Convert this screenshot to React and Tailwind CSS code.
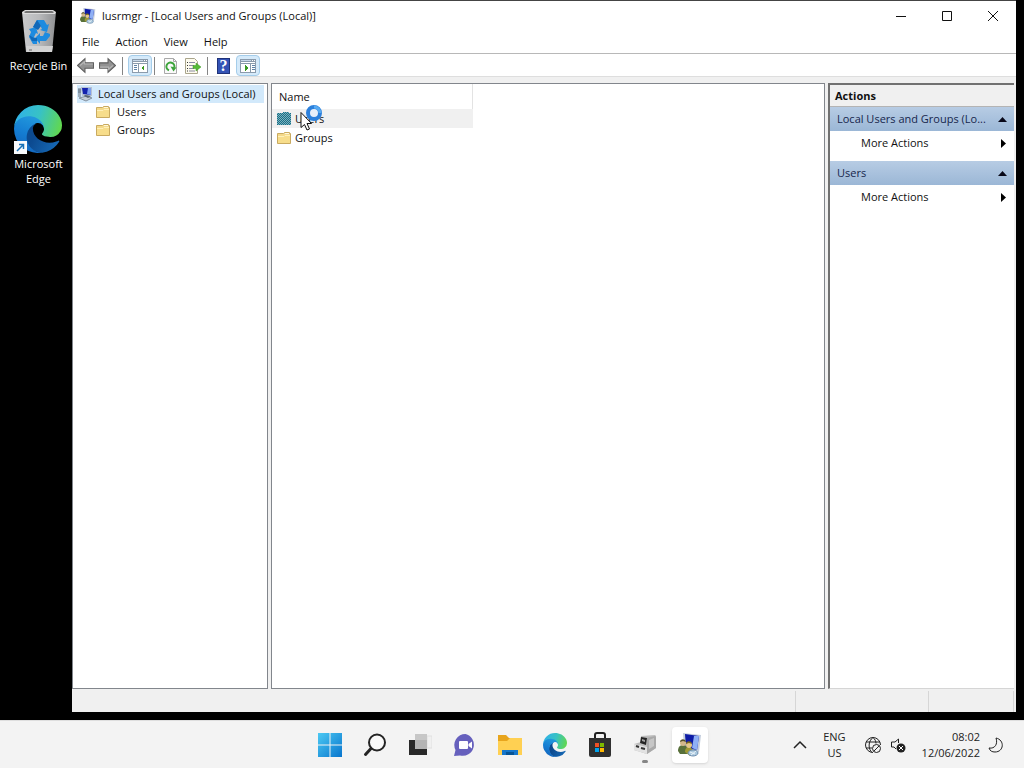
import React from 'react';

const EdgeLogo = ({ className }) => (
  <svg viewBox="0 0 256 256" className={className} aria-hidden="true">
    <defs>
      <linearGradient id="edge-deep" x1="0.3" y1="0.3" x2="1" y2="0.6">
        <stop offset="0" stopColor="#0c4a90" />
        <stop offset="1" stopColor="#1668b4" />
      </linearGradient>
      <linearGradient id="edge-blue" x1="0.6" y1="0.1" x2="0.3" y2="1">
        <stop offset="0" stopColor="#2196dc" />
        <stop offset="0.5" stopColor="#147cd2" />
        <stop offset="1" stopColor="#1464bb" />
      </linearGradient>
      <linearGradient id="edge-green" x1="0" y1="0.4" x2="1" y2="0.6">
        <stop offset="0" stopColor="#2fb1e8" />
        <stop offset="0.5" stopColor="#38c2c4" />
        <stop offset="1" stopColor="#62d84e" />
      </linearGradient>
    </defs>
    <path fill="url(#edge-deep)" d="M235.68 190.46a93.73 93.73 0 01-10.54 4.71 101.87 101.87 0 01-35.9 6.46c-47.32 0-88.54-32.55-88.54-74.32A31.48 31.48 0 01117.13 99.9c-42.8 1.8-53.8 46.4-53.8 72.53 0 73.88 68.09 81.37 82.76 81.37 7.91 0 19.84-2.3 27-4.56l1.31-.44a128.34 128.34 0 0066.6-52.8 4 4 0 00-5.32-5.54z" />
    <path fill="url(#edge-blue)" d="M105.73 241.42a79.2 79.2 0 01-22.74-21.34 80.72 80.72 0 0129.53-120c3.12-1.47 8.45-4.13 15.54-4a32.35 32.35 0 0125.69 13 31.88 31.88 0 016.36 18.66c0-.21 24.46-79.6-80-79.6-43.9 0-80 41.66-80 78.21a130.15 130.15 0 0012.11 56 128 128 0 00156.38 67.11 75.55 75.55 0 01-62.78-8z" />
    <path fill="url(#edge-green)" d="M152.33 148.86c-.81 1.05-3.3 2.5-3.3 5.66 0 2.61 1.7 5.12 4.72 7.23 14.38 10 41.49 8.68 41.56 8.68a59.56 59.56 0 0030.27-8.35A61.38 61.38 0 00256 109.2c.26-22.41-8-37.31-11.34-43.91C223.46 23.84 177.72 0 128 0A128 128 0 000 126.2c.48-36.54 36.8-66.05 80-66.05 3.5 0 23.46.34 42 10.07 16.34 8.58 24.9 18.94 30.85 29.21 6.18 10.67 7.28 24.15 7.28 29.52s-2.74 13.33-7.8 19.91z" />
  </svg>
);

const RecycleBin = () => (
  <svg viewBox="0 0 48 48" className="size-12" aria-hidden="true">
    <defs>
      <linearGradient id="bin" x1="0" y1="0" x2="1" y2="0">
        <stop offset="0" stopColor="#c9cacc" />
        <stop offset="0.5" stopColor="#b9babc" />
        <stop offset="1" stopColor="#8f9092" />
      </linearGradient>
    </defs>
    <path d="M7 4h34l-4 40H11z" fill="url(#bin)" />
    <path d="M7 4l3-2h28l3 2-1 2H8z" fill="#dcdcdc" />
    <path d="M9 4l2-1h26l2 1-1 1H10z" fill="#727272" />
    <path d="M11 38h27l-1 6H12z" fill="#d2d2d2" />
    <path d="M14 42h3" stroke="#666" />
    <g fill="#1d8be0">
      <path d="M18 19l4-7h7l3 5 2-1-2 8-7-2 2-1-2-4-3 4z" />
      <path d="M14 21l7-2 2 7-2-1-2 4 3 3v4h-4l-4-7 2-5z" />
      <path d="M35 26l-5-2-2 4h-3v-3l-5 5 5 6v-3h6l4-5z" />
    </g>
    <path d="M22 12l4 6-3 4-5-3zM14 27l3 6h5v-3h-3z" fill="#1068b8" />
  </svg>
);

// Computer with two users in front of a blue screen
const UsersApp = ({ className }) => (
  <svg viewBox="0 0 24 24" className={className} aria-hidden="true">
    <path d="M5 0l18 2-2 17-15-2z" fill="#c3cddc" />
    <path d="M7 1l14 2-2 14-11-2z" fill="#0d1ba6" />
    <path d="M16 3l5 0-2 14-5-2 1-6z" fill="#8fb0f5" />
    <path d="M0 18c0-4 2-6 5-6s5 2 5 6v3H2z" fill="#58703a" />
    <circle cx="5" cy="10" r="3" fill="#d2b88a" />
    <path d="M2 9c0-3 5-4 6 0l-3-1z" fill="#54502c" />
    <path d="M7 19c0-4 2-5 4-5s4 2 4 6l-3 3z" fill="#a09a32" />
    <circle cx="11" cy="12" r="3" fill="#e3c78a" />
    <path d="M8 11c0-3 5-4 6 0l-3-1z" fill="#7a671f" />
    <ellipse cx="15" cy="20" rx="5" ry="3" fill="#a9c8df" stroke="#6f8fae" />
    <path d="M12 19l5 2M18 18l-5 4" stroke="#e9f2f8" />
  </svg>
);

const RootIcon = () => (
  <svg viewBox="0 0 16 16" className="size-4 shrink-0" aria-hidden="true">
    <path d="M4 1h11v9H5z" fill="#b6c1d1" />
    <path d="M5 2h9v7l-8-1z" fill="#1422ad" />
    <path d="M11 2h3v7l-4-1z" fill="#7da0ef" />
    <path d="M1 2h3v9H1z" fill="#9eaebe" />
    <path d="M1 4h3M1 6h3" stroke="#5e7082" />
    <path d="M2 12l8-2 5 2-6 3z" fill="#c6ced7" stroke="#8492a0" />
    <path d="M8 9l6 1-3 2-4-2z" fill="#5a6470" />
  </svg>
);

const Folder = () => (
  <svg viewBox="0 0 16 16" className="size-4 shrink-0" aria-hidden="true">
    <path d="M1.500 3.500h6l1-1h5v1h1v10h-13z" fill="#f4d989" stroke="#c9aa60" />
    <path d="M9 3h4v1H9z" fill="#fff8dd" />
    <path d="M2 7h6l1-1h5v7H2z" fill="#f7dd8b" />
    <path d="M2 6.500h6l1-1h5" fill="none" stroke="#fff0b8" />
  </svg>
);

const SelectedFolder = () => (
  <svg viewBox="0 0 16 16" className="size-4 shrink-0" shapeRendering="crispEdges" aria-hidden="true">
    <defs>
      <pattern id="dither" width="2" height="2" patternUnits="userSpaceOnUse">
        <rect width="2" height="2" fill="#7fb0ba" />
        <path d="M0 0h1v1H0zM1 1h1v1H1z" fill="#16708a" />
      </pattern>
    </defs>
    <path d="M1 2h6V1h6v1h2v12H1z" fill="url(#dither)" />
  </svg>
);

const Arrow = ({ className }) => (
  <svg viewBox="0 0 16 16" className={className} aria-hidden="true">
    <path d="M.5 8l7-6.500v4h8v5h-8v4z" fill="#929292" stroke="#5f5f5f" />
    <path d="M3 8l4-3.500v2h8" fill="none" stroke="#b5b5b5" />
  </svg>
);

const PaneIcon = ({ right }) => (
  <svg viewBox="0 0 16 14" className="h-[14px] w-4" shapeRendering="crispEdges" aria-hidden="true">
    <path d="M0 0h16v14H0z" fill="#8b9bac" />
    <path d="M1 3h14v1H1zM1 5h14v8H1z" fill="#fff" />
    <path d="M1 1h10v1H1z" fill="#c8d8e8" />
    <path d="M12 1h1v1h-1zM14 1h1v1h-1z" fill="#fff" />
    <path d={right ? 'M10 5h1v8h-1z' : 'M6 5h1v8H6z'} fill="#8b9bac" />
    <path d={right ? 'M12 6h3v1h-3zM12 8h3v1h-3zM12 10h3v1h-3z' : 'M2 6h3v1H2zM2 8h3v1H2zM2 10h3v1H2z'} fill="#5e82a6" />
    <path d={right ? 'M5 6l3 3-3 3z' : 'M12 6L9 9l3 3z'} fill="#3a9a22" />
  </svg>
);

const RefreshIcon = () => (
  <svg viewBox="0 0 16 16" className="size-4" aria-hidden="true">
    <path d="M1.500.5h9l3 3v12h-12z" fill="#fafafa" stroke="#a9a9a9" />
    <path d="M10.500.5v3h3" fill="none" stroke="#a9a9a9" />
    <path d="M6 12.300a4 4 0 1 1 5.300-2.800" fill="none" stroke="#3da43b" strokeWidth="2" />
    <path d="M7.500 8.500l6 1-3 4z" fill="#3da43b" />
  </svg>
);

const ExportIcon = () => (
  <svg viewBox="0 0 16 16" className="size-4" aria-hidden="true">
    <path d="M.5.5h9l3 3v12H.5z" fill="#fdfbee" stroke="#aaa58c" />
    <path d="M2 4.500h1M2 7.500h1M2 10.500h1M2 13h1" stroke="#333" />
    <path d="M4 4.500h6M4 7.500h5M4 10.500h5M4 13h6" stroke="#8b8ba2" />
    <path d="M8 7.500h3V5l5 4-5 4v-2.500H8z" fill="#56bb36" stroke="#3e9627" strokeWidth=".5" />
  </svg>
);

const HelpIcon = () => (
  <span className="flex h-4 w-[13px] items-center justify-center border border-[#1f3279] bg-[#3453b5] font-['Liberation_Serif',serif] text-base leading-4 font-bold text-white">?</span>
);

const Divider = () => <span className="h-[18px] w-px bg-[#858585]" />;

const Toolbar = () => (
  <div className="flex h-6 items-center border-y border-t-[#b8b8b8] border-b-[#dedede] bg-white pt-px pl-[5px]">
    <button aria-label="Back" className="mr-[5px]"><Arrow className="size-[17px]" /></button>
    <button aria-label="Forward" className="mr-[6px]"><Arrow className="size-[17px] rotate-180" /></button>
    <Divider />
    <button aria-label="Console tree" className="mr-[2px] ml-[5px] flex h-[21px] w-6 items-center justify-center rounded-sm border border-[#a5cdea] bg-[#d5eafa]">
      <PaneIcon />
    </button>
    <Divider />
    <button aria-label="Refresh" className="ml-2"><RefreshIcon /></button>
    <button aria-label="Export list" className="mx-[6px]"><ExportIcon /></button>
    <Divider />
    <button aria-label="Help" className="mr-[6px] ml-[9px]"><HelpIcon /></button>
    <button aria-label="Action pane" className="flex h-[21px] w-6 items-center justify-center rounded-sm border border-[#a5cdea] bg-[#d5eafa]">
      <PaneIcon right />
    </button>
  </div>
);

const TitleBar = () => (
  <header className="flex h-[29px] items-center bg-white pl-2">
    <UsersApp className="size-4" />
    <h1 className="ml-[6px] flex-1">lusrmgr - [Local Users and Groups (Local)]</h1>
    <button aria-label="Minimize" className="flex h-full w-[46px] items-center justify-center">
      <svg viewBox="0 0 12 12" className="size-3"><path d="M1 6.500h10" stroke="#111" /></svg>
    </button>
    <button aria-label="Maximize" className="flex h-full w-[46px] items-center justify-center">
      <svg viewBox="0 0 12 12" className="size-3"><path d="M1.500 1.500h9v9h-9z" fill="none" stroke="#111" /></svg>
    </button>
    <button aria-label="Close" className="flex h-full w-[46px] items-center justify-center">
      <svg viewBox="0 0 12 12" className="size-3"><path d="M1 1l10 10M11 1L1 11" stroke="#111" /></svg>
    </button>
  </header>
);

const TreePane = () => (
  <nav className="w-[196px] shrink-0 border border-[#82868c] bg-white pt-px">
    <button className="mr-[3px] ml-1 flex h-[18px] w-[187px] items-center gap-[5px] bg-[#d2e9fb] whitespace-nowrap">
      <RootIcon />Local Users and Groups (Local)
    </button>
    {['Users', 'Groups'].map((name) => (
      <button key={name} className="ml-[22px] flex h-[18px] items-center gap-[6px]">
        <Folder />{name}
      </button>
    ))}
  </nav>
);

const ListPane = () => (
  <main className="relative flex-1 border border-[#82868c] bg-white">
    <table className="w-[201px] text-left">
      <thead>
        <tr className="h-[25px]">
          <th className="border-r border-[#e3e3e3] pl-[7px] font-normal">Name</th>
        </tr>
      </thead>
      <tbody>
        <tr className="h-[19px] bg-[#f0f0f0]">
          <td><div className="flex items-center gap-[3px] pl-1"><SelectedFolder />Users</div></td>
        </tr>
        <tr className="h-5">
          <td><div className="flex items-center gap-[3px] pl-1"><Folder />Groups</div></td>
        </tr>
      </tbody>
    </table>
    {/* Busy pointer */}
    <svg viewBox="0 0 26 28" className="absolute top-5 left-7 h-7 w-[26px]" aria-hidden="true">
      <circle cx="14" cy="9" r="6" fill="#e8effa" stroke="#2c80dc" strokeWidth="4" />
      <path d="M14 3a6 6 0 0 1 6 6" fill="none" stroke="#56aaf2" strokeWidth="3" />
      <path d="M1 8.500v15l3.500-3 2.500 5.500 2.500-1-2.500-5.500h4.500z" fill="#fff" stroke="#111" />
    </svg>
  </main>
);

const ActionGroup = ({ title }) => (
  <section className="mb-[6px]">
    <button className="flex h-6 w-full items-center justify-between bg-linear-to-b from-[#b7cce4] to-[#9bb7d6] pr-[7px] pl-[7px] whitespace-nowrap text-[#16264c]">
      {title}
      <svg viewBox="0 0 9 5" className="h-[5px] w-[9px] shrink-0"><path d="M0 5l4.500-5L9 5z" fill="#080818" /></svg>
    </button>
    <button className="flex h-6 w-full items-center justify-between pr-2 pl-[31px]">
      More Actions
      <svg viewBox="0 0 5 9" className="h-[9px] w-[5px]"><path d="M0 0l5 4.500L0 9z" fill="#000" /></svg>
    </button>
  </section>
);

const ActionsPane = () => (
  <aside className="w-[186px] shrink-0 border-t-2 border-b border-l-2 border-t-[#717171] border-b-[#d5d5d5] border-l-[#717171] bg-white">
    <h2 className="h-[22px] border-b border-[#b4b4b4] bg-[#f0f0f0] pl-[5px] leading-[22px] font-bold">Actions</h2>
    <ActionGroup title="Local Users and Groups (Lo..." />
    <ActionGroup title="Users" />
  </aside>
);

const ConsoleWindow = () => (
  <div className="mr-2 mb-2 flex min-w-0 flex-1 flex-col border-t border-[#444] bg-[#f0f0f0]">
    <TitleBar />
    <div className="flex h-[23px] items-center bg-white pl-[2px]">
      {['File', 'Action', 'View', 'Help'].map((item) => (
        <button key={item} className="px-2">{item}</button>
      ))}
    </div>
    <Toolbar />
    <div className="mt-[6px] mr-[2px] flex flex-1 gap-[3px]">
      <TreePane />
      <ListPane />
      <ActionsPane />
    </div>
    <footer className="flex h-[23px] justify-end pt-[2px]">
      <div className="w-[133px] border-l border-[#d6d6d6]" />
      <div className="w-[86px] border-x border-[#d6d6d6]" />
      <div className="w-[2px]" />
    </footer>
  </div>
);

const StartIcon = () => (
  <svg viewBox="0 0 24 24" className="size-6" aria-hidden="true">
    <defs>
      <linearGradient id="start" x1="0" y1="0" x2="24" y2="24" gradientUnits="userSpaceOnUse">
        <stop offset="0" stopColor="#4cc9f3" />
        <stop offset="1" stopColor="#0875cd" />
      </linearGradient>
    </defs>
    <path d="M0 0h11.500v11.500H0zM12.500 0H24v11.500H12.500zM0 12.500h11.500V24H0zM12.500 12.500H24V24H12.500z" fill="url(#start)" />
  </svg>
);

const SearchIcon = () => (
  <svg viewBox="0 0 24 24" className="size-6" aria-hidden="true">
    <circle cx="14" cy="9.500" r="8" fill="#fafafa" stroke="#242424" strokeWidth="2" />
    <path d="M8 15.500l-5.500 6" stroke="#242424" strokeWidth="3" strokeLinecap="round" />
  </svg>
);

const TaskViewIcon = () => (
  <svg viewBox="0 0 24 24" className="size-6" aria-hidden="true">
    <path d="M19 3h5v12h-5z" fill="#f0f0f0" stroke="#e0e0e0" />
    <path d="M1 7h18v15H1z" fill="#292929" />
    <path d="M7 1h12v15H7z" fill="#c7c7c7" />
    <path d="M7 7h12v9H7z" fill="#b4b4b4" />
  </svg>
);

const ChatIcon = () => (
  <svg viewBox="0 0 24 24" className="size-6" aria-hidden="true">
    <path d="M12.500 1A11 11 0 1 1 7 22.500l-6 .5 1.500-6A11 11 0 0 1 12.500 1z" fill="#6660bd" />
    <rect x="6" y="8" width="9" height="8" rx="1" fill="#fff" />
    <path d="M15.500 11L19 8.500v7L15.500 13z" fill="#fff" />
  </svg>
);

const ExplorerIcon = () => (
  <svg viewBox="0 0 26 24" className="h-6 w-[26px]" aria-hidden="true">
    <path d="M1 2h8l3 3h13v17H1z" fill="#e8a51d" />
    <path d="M1 8h9l3-3h12v17H1z" fill="#ffd052" />
    <path d="M5 17h16v5H5z" fill="#1676cb" />
    <path d="M9 19h8v3H9z" fill="#075495" />
  </svg>
);

const StoreIcon = () => (
  <svg viewBox="0 0 24 26" className="h-[26px] w-6" aria-hidden="true">
    <path d="M7 8V3q0-2 2-2h6q2 0 2 2v5" fill="none" stroke="#202020" strokeWidth="2" />
    <path d="M1 6h22v17q0 2-2 2H3q-2 0-2-2z" fill="#303030" />
    <path d="M7 11h4v4H7z" fill="#f05024" />
    <path d="M12 11h4v4h-4z" fill="#7eb900" />
    <path d="M7 16h4v4H7z" fill="#00a3ed" />
    <path d="M12 16h4v4h-4z" fill="#ffb800" />
  </svg>
);

const DeviceIcon = () => (
  <svg viewBox="0 0 24 24" className="size-6" aria-hidden="true">
    <path d="M8 3l14-1 1 1v12l-9 6-13-4v-6l7-2z" fill="#bdbdbd" />
    <path d="M8 4l6 1-1 7-6-2z" fill="#252525" />
    <path d="M9 6l3 1v2l-3-1z" fill="#a5a5a5" />
    <path d="M14 5l8-2 1 1v11l-9 6v-8z" fill="#a9a9a9" />
    <path d="M16 7l5-2v8l-5 3z" fill="#c6c6c6" />
    <path d="M1 11l13 3v7L1 17z" fill="#e2e2e2" />
    <path d="M3 13l3 1M8 15l4 1" stroke="#333" strokeWidth="2" />
  </svg>
);

const apps = [
  { name: 'Start', icon: <StartIcon /> },
  { name: 'Search', icon: <SearchIcon /> },
  { name: 'Task View', icon: <TaskViewIcon /> },
  { name: 'Chat', icon: <ChatIcon /> },
  { name: 'File Explorer', icon: <ExplorerIcon /> },
  { name: 'Microsoft Edge', icon: <EdgeLogo className="size-6" /> },
  { name: 'Microsoft Store', icon: <StoreIcon /> },
  { name: 'Server tools', icon: <DeviceIcon />, running: true },
  { name: 'lusrmgr', icon: <UsersApp className="size-6" />, active: true },
];

const Taskbar = () => (
  <footer className="relative flex h-12 shrink-0 items-center justify-center border-t border-[#dedede] bg-[#f3f3f3] pr-1">
    <div className="flex gap-[9px]">
      {apps.map((app) => (
        <button
          key={app.name}
          aria-label={app.name}
          className={`relative flex size-9 items-center justify-center rounded ${app.active ? 'bg-white shadow-sm' : ''}`}
        >
          {app.icon}
          {app.running && <span className="absolute bottom-0 h-[3px] w-[6px] rounded-full bg-[#868686]" />}
        </button>
      ))}
    </div>
    <div className="absolute right-5 flex h-full items-center text-[#222]">
      <button aria-label="Show hidden icons" className="mr-4">
        <svg viewBox="0 0 14 14" className="size-[14px]"><path d="M1 10l6-6 6 6" fill="none" stroke="#222" strokeWidth="1.500" /></svg>
      </button>
      <button className="mr-[18px] text-center">ENG<br />US</button>
      <button aria-label="Network and sound" className="mr-4 flex items-center gap-2">
        <svg viewBox="0 0 18 18" className="size-[18px]" fill="none" stroke="#222">
          <path d="M9 16.500A7.500 7.500 0 1 1 16.500 9M9 1.500C4 5 4 13 8 16.500M9 1.500c2 1.500 3 4 3 6M2 6h14M2 12h6" />
          <circle cx="12.500" cy="12.500" r="4" fill="#f3f3f3" />
          <path d="M10 15l5-5" />
        </svg>
        <svg viewBox="0 0 16 16" className="size-4" fill="none" stroke="#222">
          <path d="M8.500 6V2L5 5H1.500v5H4l2 2" />
          <circle cx="11" cy="11" r="4.500" fill="#222" stroke="none" />
          <path d="M9 9l4 4M13 9l-4 4" stroke="#fff" />
        </svg>
      </button>
      <button className="text-right">08:02<br />12/06/2022</button>
      <button aria-label="Focus assist" className="ml-2">
        <svg viewBox="0 0 16 16" className="size-4"><path d="M8 1c9 2 8 14-1 14-3 0-5-1-6-4 6 1 9-4 7-10z" fill="none" stroke="#222" /></svg>
      </button>
    </div>
  </footer>
);

const App = () => (
  <div className="flex h-screen flex-col overflow-hidden bg-black font-['Open_Sans','Noto_Sans',sans-serif] text-[11px] leading-4 text-[#111]">
    <div className="flex min-h-0 flex-1">
      <div className="flex w-[72px] shrink-0 flex-col items-center pt-2 pl-[5px] leading-[15px] text-white">
        <button className="flex flex-col items-center whitespace-nowrap">
          <RecycleBin />
          <span className="mt-[2px]">Recycle Bin</span>
        </button>
        <button className="relative mt-8 flex flex-col items-center">
          <EdgeLogo className="size-12" />
          <svg viewBox="0 0 13 13" className="absolute top-9 left-0 size-[13px]" aria-hidden="true">
            <path d="M0 0h13v13H0z" fill="#f7f9fc" />
            <path d="M3 10l6-6M5 3.500h4.500V8" fill="none" stroke="#1671b8" strokeWidth="1.500" />
          </svg>
          <span className="mt-[3px]">Microsoft<br />Edge</span>
        </button>
      </div>
      <ConsoleWindow />
    </div>
    <Taskbar />
  </div>
);

export default App;
